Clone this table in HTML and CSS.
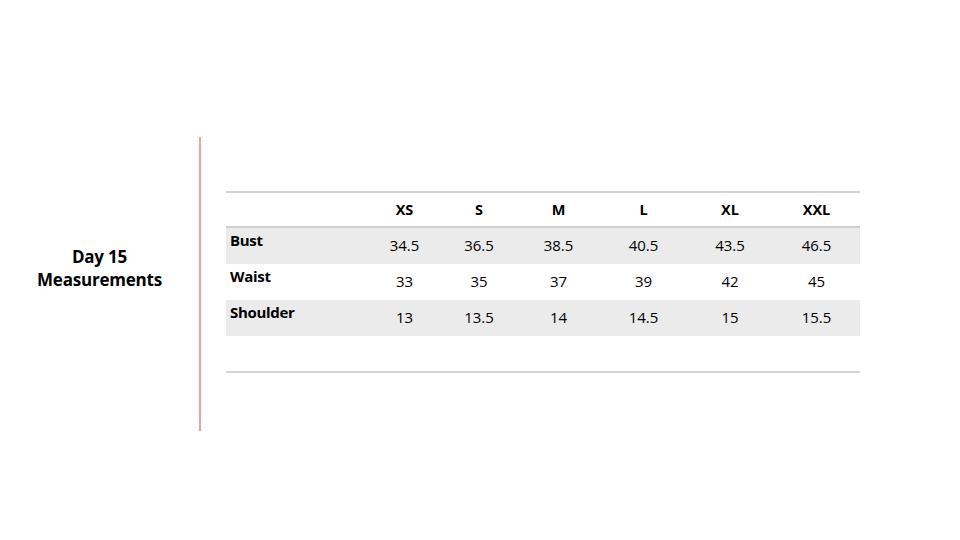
FILE: index.html
```html
<!DOCTYPE html>
<html>
<head>
<meta charset="utf-8">
<link rel="stylesheet" href="styles.css">
</head>
<body>
<div class="slide">
  <div class="title-col">
    <h1 class="title">Day 15<br>Measurements</h1>
  </div>
  <div class="divider"></div>
  <div class="table-wrap">
    <div class="grid head">
      <div></div>
      <div class="c">XS</div>
      <div class="c">S</div>
      <div class="c">M</div>
      <div class="c">L</div>
      <div class="c">XL</div>
      <div class="c">XXL</div>
    </div>
    <div class="grid row shade">
      <div class="lbl">Bust</div>
      <div class="c">34.5</div><div class="c">36.5</div><div class="c">38.5</div><div class="c">40.5</div><div class="c">43.5</div><div class="c">46.5</div>
    </div>
    <div class="grid row">
      <div class="lbl">Waist</div>
      <div class="c">33</div><div class="c">35</div><div class="c">37</div><div class="c">39</div><div class="c">42</div><div class="c">45</div>
    </div>
    <div class="grid row shade">
      <div class="lbl">Shoulder</div>
      <div class="c">13</div><div class="c">13.5</div><div class="c">14</div><div class="c">14.5</div><div class="c">15</div><div class="c">15.5</div>
    </div>
    <div class="spacer"></div>
  </div>
</div>
</body>
</html>
```
FILE: styles.css
```css
* { box-sizing: border-box; }
html, body { margin: 0; padding: 0; background: #ffffff; }
body { font-family: "Open Sans", "Liberation Sans", sans-serif; color: #000; }
.slide { width: 960px; height: 540px; display: flex; align-items: flex-start; }
.title-col { width: 199px; height: 540px; display: flex; align-items: center; justify-content: center; padding-bottom: 4px; }
.title { margin: 0; font-size: 17px; font-weight: 700; line-height: 23px; text-align: center; letter-spacing: -0.2px; }
.divider { width: 2px; height: 294px; margin-top: 137px; background: #eaa5a5; }
.table-wrap { margin-left: 25px; margin-top: 191px; width: 634px; border-top: 2px solid #d3d3d3; border-bottom: 2px solid #d3d3d3; }
.grid { display: grid; grid-template-columns: 142px 73px 76px 83px 87px 86px 87px; }
.head { height: 35px; align-items: center; font-weight: 700; font-size: 14.5px; border-bottom: 2px solid #cfcfcf; }
.row { height: 36px; font-size: 15px; }
.row.shade { background: #ebebeb; }
.row:last-of-type { height: 35px; }
.c { text-align: center; align-self: center; }
.row .c { padding-bottom: 2px; }
.lbl { font-weight: 700; padding-left: 4px; padding-top: 2px; font-size: 15px; letter-spacing: -0.3px; }
.spacer { height: 35px; }
```
